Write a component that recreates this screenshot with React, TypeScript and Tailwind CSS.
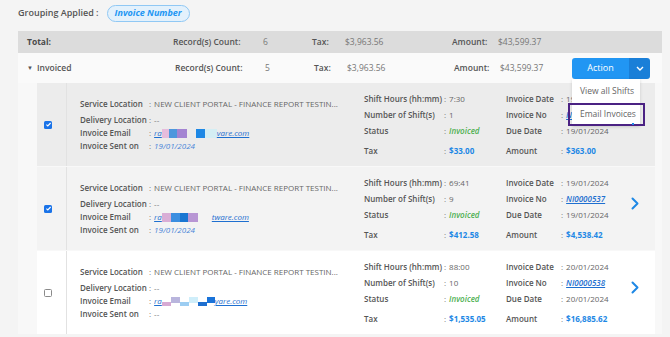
import React from 'react';

type Blk = { w: number; c: string; h?: 'full' | 'top' | 'bottom' };

interface Rec {
  checked: boolean;
  bg: string;
  hours: string;
  shifts: string;
  tax: string;
  amount: string;
  invDate: string;
  invNo: string;
  dueDate: string;
  sentOn: string;
  blocks: Blk[];
  tail: string;
}

const records: Rec[] = [
  {
    checked: true,
    bg: 'bg-[#ececec]',
    hours: '7:30',
    shifts: '1',
    tax: '$33.00',
    amount: '$363.00',
    invDate: '19/01/2024',
    invNo: 'NI0000536',
    dueDate: '19/01/2024',
    sentOn: '19/01/2024',
    blocks: [
      { w: 7, c: '#e6bcdc' },
      { w: 8, c: '#4d97dd' },
      { w: 10, c: '#a384d2' },
      { w: 9, c: 'transparent' },
      { w: 9, c: '#1e88e5' },
      { w: 12, c: '#d4eef4' },
    ],
    tail: 'vare.com',
  },
  {
    checked: true,
    bg: 'bg-[#f3f3f3]',
    hours: '69:41',
    shifts: '9',
    tax: '$412.58',
    amount: '$4,538.42',
    invDate: '19/01/2024',
    invNo: 'NI0000537',
    dueDate: '19/01/2024',
    sentOn: '19/01/2024',
    blocks: [
      { w: 9, c: '#d9aed6' },
      { w: 9, c: '#3b8ee0' },
      { w: 8, c: '#1976d2' },
      { w: 10, c: '#b896d4' },
      { w: 14, c: 'transparent' },
    ],
    tail: 'tware.com',
  },
  {
    checked: false,
    bg: 'bg-white',
    hours: '88:00',
    shifts: '10',
    tax: '$1,535.05',
    amount: '$16,885.62',
    invDate: '20/01/2024',
    invNo: 'NI0000538',
    dueDate: '20/01/2024',
    sentOn: '--',
    blocks: [
      { w: 9, c: '#d7a9d3', h: 'bottom' },
      { w: 9, c: '#b9b5dd', h: 'top' },
      { w: 9, c: '#9ccdf2', h: 'bottom' },
      { w: 9, c: '#cfeefa', h: 'top' },
      { w: 9, c: '#1e6fd0', h: 'bottom' },
      { w: 8, c: '#1a73d9', h: 'top' },
    ],
    tail: 'yare.com',
  },
];

const Chevron = ({ className }: { className?: string }) => (
  <svg viewBox="0 0 8 13" className={className} fill="none">
    <path d="M1.5 1.5 L6.5 6.5 L1.5 11.5" stroke="#1e88e5" strokeWidth="2" strokeLinecap="round" strokeLinejoin="round" />
  </svg>
);

const Check = ({ checked }: { checked: boolean }) =>
  checked ? (
    <span className="flex h-[8px] w-[8px] items-center justify-center rounded-[1.5px] bg-[#1a73e8]">
      <svg viewBox="0 0 8 8" className="h-[7px] w-[7px]">
        <path d="M1.6 4.2 L3.2 5.7 L6.4 2.3" stroke="white" strokeWidth="1.3" fill="none" />
      </svg>
    </span>
  ) : (
    <span className="h-[8px] w-[8px] rounded-[1.5px] border border-[#8a8a8a] bg-white" />
  );

const Email = ({ r }: { r: Rec }) => (
  <span className="flex items-center italic text-[#1e6fd0] underline">
    <span>ra</span>
    {r.blocks.map((b, i) => (
      <span key={i} className="flex h-[9px] flex-col" style={{ width: b.w }}>
        {b.h === 'top' ? (
          <span className="h-[6px]" style={{ background: b.c }} />
        ) : b.h === 'bottom' ? (
          <span className="mt-[5px] h-[4px]" style={{ background: b.c }} />
        ) : (
          <span className="h-[9px]" style={{ background: b.c }} />
        )}
      </span>
    ))}
    <span>{r.tail}</span>
  </span>
);

const LeftRow = ({ label, children, cls = '' }: { label: string; children: React.ReactNode; cls?: string }) => (
  <div className={`flex h-[13px] items-center ${cls}`}>
    <span className="w-[69px] shrink-0 font-semibold text-[#555]">{label}</span>
    <span className="mr-[3px] text-[#777]">:</span>
    {children}
  </div>
);

const RCell = ({ label, lw, vw, children }: { label: string; lw: string; vw: string; children: React.ReactNode }) => (
  <>
    <span className={`${lw} shrink-0 font-semibold text-[#555]`}>{label}</span>
    <span className={`${vw} flex shrink-0 items-center`}>
      <span className="mr-[3px] text-[#777]">:</span>
      {children}
    </span>
  </>
);

const Record = ({ r }: { r: Rec }) => (
  <div className={`flex h-[83px] ${r.bg}`}>
    <div className="flex w-[30px] shrink-0 items-center border-r border-[#e2e2e2] pl-[7px]">
      <Check checked={r.checked} />
    </div>
    <div className="flex flex-1 items-center pl-[13px] text-[8px]">
      <div className="w-[284px] shrink-0 pt-[1px]">
        <LeftRow label="Service Location" cls="mb-[3.5px]">
          <span className="text-[#666]">NEW CLIENT PORTAL - FINANCE REPORT TESTIN...</span>
        </LeftRow>
        <LeftRow label="Delivery Location">
          <span className="text-[#777]">--</span>
        </LeftRow>
        <LeftRow label="Invoice Email">
          <Email r={r} />
        </LeftRow>
        <LeftRow label="Invoice Sent on">
          {r.sentOn === '--' ? (
            <span className="text-[#777]">--</span>
          ) : (
            <span className="italic text-[#4a86d8]">{r.sentOn}</span>
          )}
        </LeftRow>
      </div>
      <div className="w-[262px] shrink-0">
        <div className="flex h-[16px] items-center">
          <RCell label="Shift Hours (hh:mm)" lw="w-[80px]" vw="w-[62px]">
            <span className="text-[#666]">{r.hours}</span>
          </RCell>
          <RCell label="Invoice Date" lw="w-[55px]" vw="w-[65px]">
            <span className="text-[#666]">{r.invDate}</span>
          </RCell>
        </div>
        <div className="flex h-[16px] items-center">
          <RCell label="Number of Shift(s)" lw="w-[80px]" vw="w-[62px]">
            <span className="text-[#666]">{r.shifts}</span>
          </RCell>
          <RCell label="Invoice No" lw="w-[55px]" vw="w-[65px]">
            <span className="font-semibold italic text-[#1e6fd0] underline">{r.invNo}</span>
          </RCell>
        </div>
        <div className="flex h-[16px] items-center">
          <RCell label="Status" lw="w-[80px]" vw="w-[62px]">
            <span className="font-semibold italic text-[#4caf50]">Invoiced</span>
          </RCell>
          <RCell label="Due Date" lw="w-[55px]" vw="w-[65px]">
            <span className="text-[#666]">{r.dueDate}</span>
          </RCell>
        </div>
        <div className="mt-[4px] flex h-[16px] items-center">
          <RCell label="Tax" lw="w-[80px]" vw="w-[62px]">
            <span className="font-bold text-[#1e88e5]">{r.tax}</span>
          </RCell>
          <RCell label="Amount" lw="w-[55px]" vw="w-[65px]">
            <span className="font-bold text-[#1e88e5]">{r.amount}</span>
          </RCell>
        </div>
      </div>
      <div className="ml-[5px] self-start pt-[30px]">
        <Chevron className="h-[13px] w-[8px]" />
      </div>
    </div>
  </div>
);

const SummaryCells = ({ count }: { count: string }) => (
  <>
    <span className="w-[90px] shrink-0 font-semibold text-[#555]">Record(s) Count:</span>
    <span className="w-[49px] shrink-0 text-[#777]">{count}</span>
    <span className="w-[33px] shrink-0 font-semibold text-[#555]">Tax:</span>
    <span className="w-[107px] shrink-0 text-[#777]">$3,963.56</span>
    <span className="w-[46px] shrink-0 font-semibold text-[#555]">Amount:</span>
    <span className="shrink-0 text-[#777]">$43,599.37</span>
  </>
);

export default function App() {
  return (
    <div
      className="h-[337px] w-[670px] overflow-hidden bg-[#f4f4f4] pl-[18px] text-[#555]"
      style={{ fontFamily: '"Open Sans", "Noto Sans", Arial, sans-serif' }}
    >
      <div className="flex h-[31px] items-center pb-[5px]">
        <span className="text-[9px] font-semibold text-[#555]">Grouping Applied :</span>
        <span className="ml-[8px] flex h-[17px] items-center rounded-full border border-[#90c8f4] bg-[#e3f1fc] px-[7px] text-[9px] font-bold italic text-[#2196f3]">
          Invoice Number
        </span>
      </div>
      <div className="w-[644px] bg-[#f8f8f8]">
        <div className="flex h-[22px] items-center bg-[#dcdcdc] pl-[9px] text-[8.5px]">
          <span className="w-[146px] shrink-0 font-bold text-[#4a4a4a]">Total:</span>
          <SummaryCells count="6" />
        </div>
        <div className="relative flex h-[30px] items-center bg-[#fafafa] pl-[9px] text-[8.5px]">
          <span className="w-[10px] text-[6px] text-[#555]">▼</span>
          <span className="w-[138px] shrink-0 font-semibold text-[#555]">Invoiced</span>
          <SummaryCells count="5" />
          <div className="ml-auto mr-[12px] flex h-[21px] w-[78px] overflow-hidden rounded-[3px] text-[9px]">
            <span className="flex flex-1 items-center justify-center bg-[#2196f3] text-white">Action</span>
            <span className="flex w-[21px] items-center justify-center bg-[#1a7fd8]">
              <svg viewBox="0 0 8 5" className="h-[5px] w-[8px]">
                <path d="M1 1 L4 4 L7 1" stroke="white" strokeWidth="1.4" fill="none" />
              </svg>
            </span>
          </div>
          <div className="absolute left-[554px] top-[26px] z-10 w-[68px] bg-white shadow-[0_1px_3px_rgba(0,0,0,0.15)] text-[8.5px] text-[#666]">
            <div className="flex h-[24px] items-center pl-[8px]">View all Shifts</div>
            <div className="relative flex h-[23px] items-center pl-[8px]">
              Email Invoices
              <span className="absolute -left-[4px] -right-[5px] top-0 bottom-0 border-2 border-[#4b2283]" />
              <span className="absolute bottom-[1px] right-[6px] h-[2px] w-[2px] bg-[#1e88e5]" />
            </div>
          </div>
        </div>
        <div className="flex flex-col gap-[1px] pl-[19px] pr-[7px]">
          {records.map((r, i) => (
            <Record key={i} r={r} />
          ))}
        </div>
      </div>
    </div>
  );
}
